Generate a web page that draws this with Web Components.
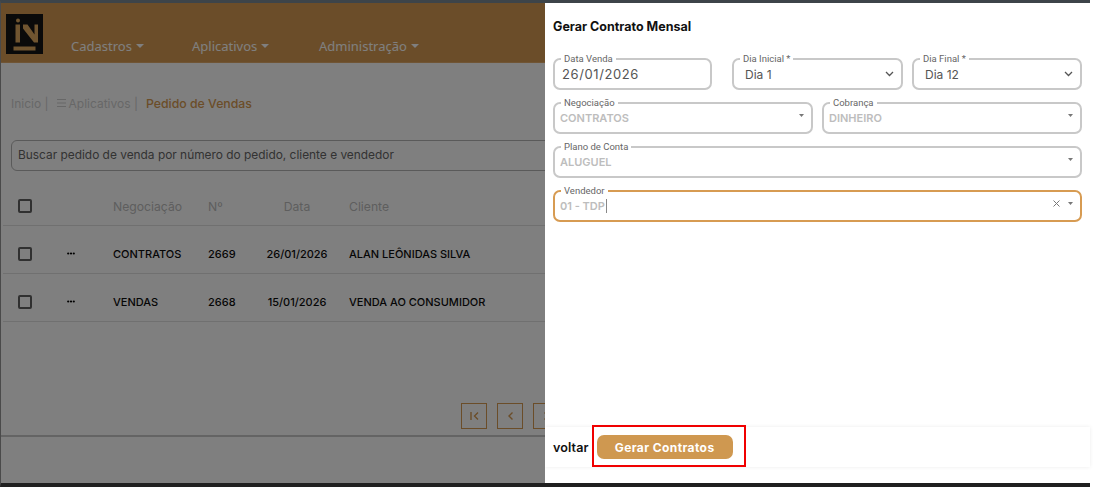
<!DOCTYPE html>
<html lang="pt-BR">
<head>
<meta charset="utf-8">
<title>Pedido de Vendas</title>
<style>
  html, body { margin: 0; padding: 0; background: #fff; }
  body { font-family: Inter, "Liberation Sans", sans-serif; }
</style>
</head>
<body>
<app-frame>
  <sales-page slot="page">
    <app-header></app-header>
    <bread-crumb></bread-crumb>
    <search-box>Buscar pedido de venda por número do pedido, cliente e vendedor</search-box>
    <order-table>
      <order-row heading negociacao="Negociação" numero="Nº" data="Data" cliente="Cliente"></order-row>
      <order-row negociacao="CONTRATOS" numero="2669" data="26/01/2026" cliente="ALAN LEÔNIDAS SILVA"></order-row>
      <order-row negociacao="VENDAS" numero="2668" data="15/01/2026" cliente="VENDA AO CONSUMIDOR"></order-row>
    </order-table>
    <page-buttons></page-buttons>
  </sales-page>
  <contract-drawer slot="drawer">
    <form-row>
      <form-field label="Data Venda" value="26/01/2026" style="width:159px" dark wide></form-field>
      <form-field label="Dia Inicial *" value="Dia 1" style="width:171px;margin-left:20px" kind="chevron" dark indent></form-field>
      <form-field label="Dia Final *" value="Dia 12" style="width:170px;margin-left:9px" kind="chevron" dark indent></form-field>
    </form-row>
    <form-row>
      <form-field label="Negociação" value="CONTRATOS" style="flex:1" kind="caret"></form-field>
      <form-field label="Cobrança" value="DINHEIRO" style="flex:1;margin-left:9px" kind="caret"></form-field>
    </form-row>
    <form-row>
      <form-field label="Plano de Conta" value="ALUGUEL" style="flex:1" kind="caret"></form-field>
    </form-row>
    <form-row>
      <form-field label="Vendedor" value="01 - TDP" style="flex:1" kind="caret" focused></form-field>
    </form-row>
  </contract-drawer>
</app-frame>

<script>
class appFrame extends HTMLElement {
  constructor() {
    super();
    this.attachShadow({ mode: 'open' });
    this.shadowRoot.innerHTML = `
      <style>
        :host {
          display: flex;
          box-sizing: border-box;
          width: 1090px;
          height: 487px;
          border-top: 3px solid #3d4449;
          border-left: 1px solid #4a4a4a;
          border-bottom: 4px solid #202020;
        }

        #page {
          position: relative;
          width: 544px;
          flex: none;
          overflow: hidden;
        }

        #dim {
          position: absolute;
          inset: 0;
          background: rgba(0, 0, 0, .5);
        }

        #drawer {
          flex: 1;
          display: flex;
          min-width: 0;
        }
      </style>
      <div id="page"><slot name="page"></slot><div id="dim"></div></div>
      <div id="drawer"><slot name="drawer"></slot></div>
    `;
  }
}

class salesPage extends HTMLElement {
  constructor() {
    super();
    this.attachShadow({ mode: 'open' });
    this.shadowRoot.innerHTML = `
      <style>
        :host {
          display: flex;
          flex-direction: column;
          width: 1089px;
          height: 100%;
          background: #fff;
          font-family: Inter, "Liberation Sans", sans-serif;
        }
      </style>
      <slot></slot>
    `;
  }
}

class appHeader extends HTMLElement {
  constructor() {
    super();
    this.attachShadow({ mode: 'open' });
    this.shadowRoot.innerHTML = `
      <style>
        :host {
          display: flex;
          box-sizing: border-box;
          height: 60px;
          padding: 11px 0 0 5px;
          background: #d79b52;
          border-bottom: 1px solid #e0ab6a;
          font-family: "Noto Sans", sans-serif;
          font-size: 13px;
          color: #fff;
        }

        svg { flex: none; display: block; }

        nav {
          display: flex;
          margin: 15px 0 0 28px;
          line-height: 22px;
        }

        nav span {
          display: flex;
          align-items: center;
          gap: 4px;
        }

        nav span:nth-child(1) { width: 121px; }
        nav span:nth-child(2) { width: 127px; }

        nav span::after {
          content: '';
          border: 4px solid transparent;
          border-top-color: #fff;
          border-bottom: 0;
        }
      </style>
      <svg width="37" height="40" viewBox="0 0 37 40">
        <rect width="37" height="40" fill="#141414"/>
        <circle cx="12" cy="6.5" r="2" fill="#e0aa60"/>
        <rect x="9.5" y="10.5" width="4.5" height="18" fill="#e0aa60"/>
        <path d="M17 10.5h4.5l7 10v-10h3.5v18h-4l-11-14z" fill="#e0aa60"/>
        <rect x="7.5" y="32.5" width="22" height="4" fill="#e0aa60"/>
      </svg>
      <nav><span>Cadastros</span><span>Aplicativos</span><span>Administração</span></nav>
    `;
  }
}

class breadCrumb extends HTMLElement {
  constructor() {
    super();
    this.attachShadow({ mode: 'open' });
    this.shadowRoot.innerHTML = `
      <style>
        :host {
          display: flex;
          align-items: center;
          height: 18px;
          margin: 31px 0 0 10px;
          font-size: 12px;
          color: #cfcfcf;
          white-space: nowrap;
        }

        svg { margin: 0 3px 0 8px; }
        b { font-weight: 500; font-size: 12.3px; color: #d79b52; margin-left: 8px; }
      </style>
      <span>Inicio |</span>
      <svg width="9" height="8" viewBox="0 0 9 8"><path d="M0 .5h9M0 4h9M0 7.5h9" stroke="#cfcfcf" fill="none"/></svg>
      <span>Aplicativos |</span>
      <b>Pedido de Vendas</b>
    `;
  }
}

class searchBox extends HTMLElement {
  constructor() {
    super();
    this.attachShadow({ mode: 'open' });
    this.shadowRoot.innerHTML = `
      <style>
        :host {
          display: flex;
          align-items: center;
          box-sizing: border-box;
          height: 31px;
          margin: 28px 8px 0 10px;
          padding: 0 0 3px 6px;
          border: 1px solid #b4b4b4;
          border-radius: 6px;
          font-size: 11.9px;
          color: #666;
          white-space: nowrap;
        }
      </style>
      <slot></slot>
    `;
  }
}

class orderTable extends HTMLElement {
  constructor() {
    super();
    this.attachShadow({ mode: 'open' });
    this.shadowRoot.innerHTML = `
      <style>
        :host {
          display: block;
          margin: 14px 0 0 2px;
        }
      </style>
      <slot></slot>
    `;
  }
}

class orderRow extends HTMLElement {
  constructor() {
    super();
    this.attachShadow({ mode: 'open' });
    const heading = this.hasAttribute('heading');
    this.shadowRoot.innerHTML = `
      <style>
        :host {
          display: grid;
          grid-template-columns: 47px 48px 95px 45px 88px 1fr;
          align-items: center;
          box-sizing: border-box;
          height: 48px;
          padding: 8px 0 0 15px;
          border-bottom: 1px solid #e0e0e0;
          font-size: 11px;
          font-weight: 500;
          color: #0c0c0c;
          white-space: nowrap;
        }

        :host([heading]) {
          height: 41px;
          padding-top: 2px;
          font-size: 12.2px;
          font-weight: 400;
          color: #bdbdbd;
        }

        i {
          display: block;
          box-sizing: border-box;
          width: 14px;
          height: 14px;
          border: 2px solid #606060;
          border-radius: 2px;
        }

        svg { display: block; margin-left: 2px; }
        .data { text-align: center; }
        .cliente { padding-left: 8px; }
      </style>
      <i></i>
      <span>${heading ? '' : '<svg width="8" height="3" viewBox="0 0 8 3"><circle cx="1.2" cy="1.5" r="1.1"/><circle cx="4" cy="1.5" r="1.1"/><circle cx="6.8" cy="1.5" r="1.1"/></svg>'}</span>
      <span>${this.getAttribute('negociacao')}</span>
      <span>${this.getAttribute('numero')}</span>
      <span class="data">${this.getAttribute('data')}</span>
      <span class="cliente">${this.getAttribute('cliente')}</span>
    `;
  }
}

class pageButtons extends HTMLElement {
  constructor() {
    super();
    this.attachShadow({ mode: 'open' });
    this.shadowRoot.innerHTML = `
      <style>
        :host {
          display: flex;
          gap: 10px;
          height: 26px;
          margin-top: 81px;
          padding: 0 0 6px 460px;
          border-bottom: 2px solid #c8c8c8;
        }

        div {
          box-sizing: border-box;
          display: flex;
          align-items: center;
          justify-content: center;
          width: 26px;
          height: 26px;
          border: 1px solid #d79b52;
        }
      </style>
      <div><svg width="9" height="8" viewBox="0 0 9 8"><path d="M1 0v8M8 .5 4.5 4 8 7.5" stroke="#d79b52" stroke-width="1.4" fill="none"/></svg></div>
      <div><svg width="5" height="8" viewBox="0 0 5 8"><path d="M4.5.5 1 4l3.5 3.5" stroke="#d79b52" stroke-width="1.4" fill="none"/></svg></div>
      <div><svg width="5" height="8" viewBox="0 0 5 8"><path d="M.5.5 4 4 .5 7.5" stroke="#d79b52" stroke-width="1.4" fill="none"/></svg></div>
    `;
  }
}

class contractDrawer extends HTMLElement {
  constructor() {
    super();
    this.attachShadow({ mode: 'open' });
    this.shadowRoot.innerHTML = `
      <style>
        :host {
          display: flex;
          flex-direction: column;
          flex: 1;
          min-width: 0;
          background: #fff;
          font-family: Inter, "Liberation Sans", sans-serif;
        }

        h1 {
          margin: 16px 8px 0;
          font-size: 12.5px;
          line-height: 16px;
          font-weight: 700;
          color: #111;
        }

        #form {
          flex: 1;
          display: flex;
          flex-direction: column;
          gap: 12px;
          margin: 23px 8px 0;
        }

        footer {
          display: flex;
          align-items: center;
          gap: 8px;
          height: 40px;
          margin-bottom: 16px;
          padding-left: 8px;
          box-shadow: 0 0 4px rgba(0, 0, 0, .08);
        }

        footer span {
          font-size: 12.6px;
          font-weight: 600;
          letter-spacing: .1px;
          color: #111;
        }

        #mark {
          position: relative;
          display: flex;
        }

        #mark::after {
          content: '';
          position: absolute;
          top: -10px;
          left: -5px;
          width: 150px;
          height: 38px;
          border: 2px solid #f00000;
        }

        button {
          width: 136px;
          height: 24px;
          padding: 0;
          border: 0;
          border-radius: 7px;
          background: #cf9850;
          color: #fff;
          font: 700 12px Inter, "Liberation Sans", sans-serif;
          letter-spacing: .4px;
        }
      </style>
      <h1>Gerar Contrato Mensal</h1>
      <div id="form"><slot></slot></div>
      <footer>
        <span>voltar</span>
        <div id="mark"><button>Gerar Contratos</button></div>
      </footer>
    `;
  }
}

class formRow extends HTMLElement {
  constructor() {
    super();
    this.attachShadow({ mode: 'open' });
    this.shadowRoot.innerHTML = `
      <style>
        :host { display: flex; }
      </style>
      <slot></slot>
    `;
  }
}

class formField extends HTMLElement {
  constructor() {
    super();
    this.attachShadow({ mode: 'open' });
    const kind = this.getAttribute('kind');
    const focused = this.hasAttribute('focused');
    let icons = '';
    if (kind === 'chevron') icons = '<svg width="9" height="6" viewBox="0 0 9 6"><path d="M1 1l3.5 3.5L8 1" stroke="#555" stroke-width="1.3" fill="none"/></svg>';
    if (kind === 'caret') icons = '<svg width="5" height="3" viewBox="0 0 5 3"><path d="M0 0h5L2.5 3z" fill="#777"/></svg>';
    if (focused) icons = '<svg class="clear" width="7" height="7" viewBox="0 0 7 7"><path d="M.5.5l6 6M6.5.5l-6 6" stroke="#777" fill="none"/></svg>' + icons;
    this.shadowRoot.innerHTML = `
      <style>
        :host {
          position: relative;
          display: flex;
          align-items: center;
          box-sizing: border-box;
          height: 32px;
          padding: 0 7px 0 5px;
          border: 2px solid #c8c8c8;
          border-radius: 7px;
          font-size: 11px;
          color: #bdbdbd;
          white-space: nowrap;
        }

        :host([focused]) { border-color: #d79b52; }
        :host([dark]) { color: #555; font-size: 12px; padding-left: 7px; }
        :host([indent]) { padding-left: 11px; }
        :host([wide]) { font-size: 13px; letter-spacing: .6px; }
        :host([kind=caret]) #value { font-weight: 600; }
        :host([kind=caret]) svg { margin-top: -5px; }

        label {
          position: absolute;
          top: -7px;
          left: 6px;
          padding: 0 3px;
          background: #fff;
          font: 9.5px/11px Roboto, sans-serif;
          letter-spacing: normal;
          color: #666;
        }

        #value { flex: 1; }
        #cursor { border-left: 1px solid #888; margin-left: 1px; }
        svg { flex: none; }
        .clear { margin-right: 8px; }
      </style>
      <label>${this.getAttribute('label')}</label>
      <span id="value">${this.getAttribute('value')}${focused ? '<span id="cursor"></span>' : ''}</span>
      ${icons}
    `;
  }
}

customElements.define('app-frame', appFrame);
customElements.define('sales-page', salesPage);
customElements.define('app-header', appHeader);
customElements.define('bread-crumb', breadCrumb);
customElements.define('search-box', searchBox);
customElements.define('order-table', orderTable);
customElements.define('order-row', orderRow);
customElements.define('page-buttons', pageButtons);
customElements.define('contract-drawer', contractDrawer);
customElements.define('form-row', formRow);
customElements.define('form-field', formField);
</script>
</body>
</html>
